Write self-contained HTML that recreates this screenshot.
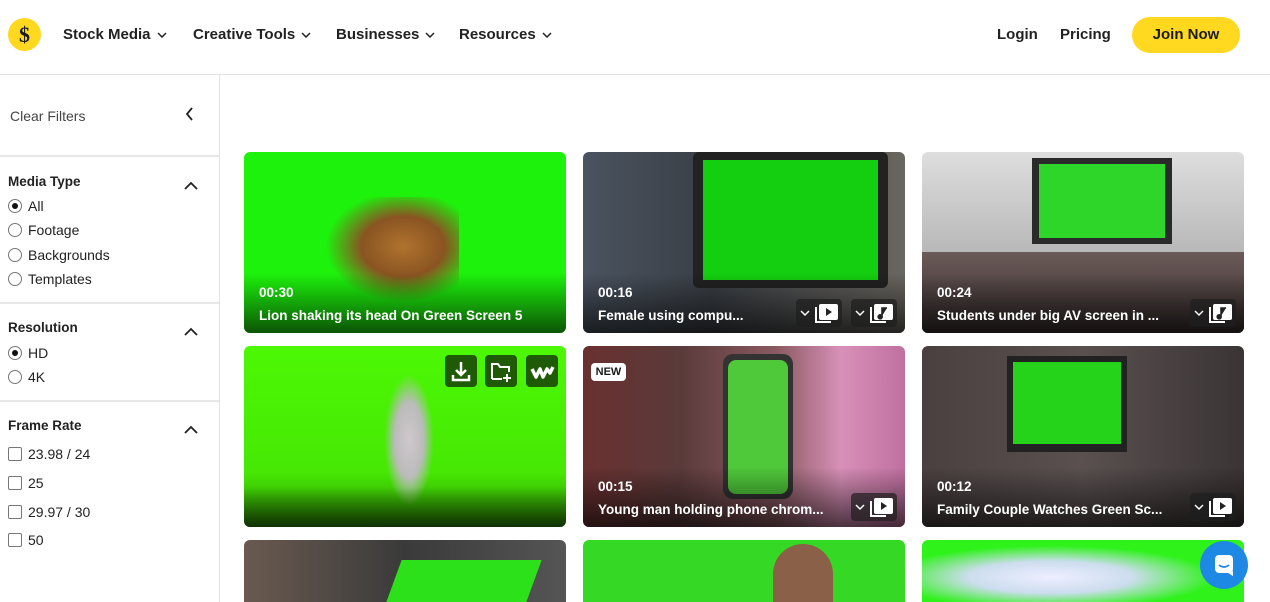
<!DOCTYPE html>
<html><head><style>
*{box-sizing:border-box;margin:0;padding:0}
html,body{width:1270px;height:602px;overflow:hidden}
body{background:#fff;font-family:"Liberation Sans",sans-serif;color:#1a1a1a;position:relative}
.hdr{position:absolute;left:0;top:0;width:1270px;height:75px;border-bottom:1px solid #e2e2e2}
.logo{position:absolute;left:8px;top:18px;width:33px;height:33px;border-radius:50%;background:#ffd81f;font:bold 22px "Liberation Serif",serif;text-align:center;line-height:33px}
.nav{position:absolute;top:26px;font-size:15px;font-weight:bold;color:#222}
.nav svg{margin-left:6px;vertical-align:middle}
.join{position:absolute;left:1132px;top:17px;width:108px;height:36px;border-radius:18px;background:#ffd81f;font-weight:bold;font-size:15px;text-align:center;line-height:36px}
.side{position:absolute;left:0;top:75px;width:220px;height:527px;border-right:1px solid #e2e2e2}
.sep{position:absolute;left:0;width:219px;height:2px;background:#e8e8e8}
.t{position:absolute;font-size:14px;color:#222}
.h{position:absolute;font-size:13.5px;font-weight:bold;color:#222;left:8px}
.r{position:absolute;left:8px;width:14px;height:14px;border:1px solid #777;border-radius:50%}
.r.on::after{content:"";position:absolute;left:3px;top:3px;width:6px;height:6px;border-radius:50%;background:#111}
.c{position:absolute;left:8px;width:14px;height:14px;border:1px solid #777;border-radius:2px}
.card{position:absolute;width:322px;height:181px;border-radius:6px;overflow:hidden}
.card.b{height:62px;border-radius:6px 6px 0 0}
.sh{position:absolute;left:0;bottom:0;width:100%;height:60px;background:linear-gradient(transparent,rgba(0,0,0,.65))}
.dur{position:absolute;left:15px;bottom:33px;color:#fff;font-weight:bold;font-size:13.5px}
.tit{position:absolute;left:15px;bottom:10px;color:#fff;font-weight:bold;font-size:13.5px}
.ic{position:absolute;bottom:6px;width:46px;height:28px;background:rgba(30,30,30,.7);border-radius:4px}
.ic svg{position:absolute;left:0;top:0}
.gb{position:absolute;top:9px;width:32px;height:32px;border-radius:4px;background:#1f5a07}
.gb svg{position:absolute;left:0;top:0}
.chat{position:absolute;left:1200px;top:541px;width:48px;height:48px;border-radius:50%;background:#1e88e5}
</style></head><body>
<div class="hdr">
<div class="logo">$</div>
<div class="nav" style="left:63px">Stock Media<svg width="10" height="6"><path d="M1 1l4 4 4-4" stroke="#222" stroke-width="1.5" fill="none"/></svg></div>
<div class="nav" style="left:193px">Creative Tools<svg width="10" height="6"><path d="M1 1l4 4 4-4" stroke="#222" stroke-width="1.5" fill="none"/></svg></div>
<div class="nav" style="left:336px">Businesses<svg width="10" height="6"><path d="M1 1l4 4 4-4" stroke="#222" stroke-width="1.5" fill="none"/></svg></div>
<div class="nav" style="left:459px">Resources<svg width="10" height="6"><path d="M1 1l4 4 4-4" stroke="#222" stroke-width="1.5" fill="none"/></svg></div>
<div class="nav" style="left:997px">Login</div>
<div class="nav" style="left:1060px">Pricing</div>
<div class="join">Join Now</div>
</div>
<div class="side">
<div class="t" style="left:10px;top:33px;color:#444">Clear Filters</div>
<svg style="position:absolute;left:185px;top:32px" width="10" height="14"><path d="M7 1L2 7l5 6" stroke="#222" stroke-width="1.8" fill="none"/></svg>
<div class="sep" style="top:80px"></div>
<div class="h" style="top:99px">Media Type</div>
<svg style="position:absolute;left:184px;top:106px" width="14" height="9"><path d="M1 8l6-6 6 6" stroke="#222" stroke-width="1.8" fill="none"/></svg>
<div class="r on" style="top:124px"></div><div class="t" style="left:28px;top:123px">All</div>
<div class="r" style="top:148px"></div><div class="t" style="left:28px;top:147px">Footage</div>
<div class="r" style="top:173px"></div><div class="t" style="left:28px;top:172px">Backgrounds</div>
<div class="r" style="top:197px"></div><div class="t" style="left:28px;top:196px">Templates</div>
<div class="sep" style="top:227px"></div>
<div class="h" style="top:245px">Resolution</div>
<svg style="position:absolute;left:184px;top:252px" width="14" height="9"><path d="M1 8l6-6 6 6" stroke="#222" stroke-width="1.8" fill="none"/></svg>
<div class="r on" style="top:271px"></div><div class="t" style="left:28px;top:270px">HD</div>
<div class="r" style="top:295px"></div><div class="t" style="left:28px;top:294px">4K</div>
<div class="sep" style="top:325px"></div>
<div class="h" style="top:343px">Frame Rate</div>
<svg style="position:absolute;left:184px;top:350px" width="14" height="9"><path d="M1 8l6-6 6 6" stroke="#222" stroke-width="1.8" fill="none"/></svg>
<div class="c" style="top:372px"></div><div class="t" style="left:28px;top:371px">23.98 / 24</div>
<div class="c" style="top:401px"></div><div class="t" style="left:28px;top:400px">25</div>
<div class="c" style="top:430px"></div><div class="t" style="left:28px;top:429px">29.97 / 30</div>
<div class="c" style="top:458px"></div><div class="t" style="left:28px;top:457px">50</div>
</div>

<svg width="0" height="0" style="position:absolute"><defs>
<g id="play"><path d="M5 12l4 4 4-4" stroke="#fff" stroke-width="1.5" fill="none"/><path d="M20 8v15h15" stroke="#fff" stroke-width="2" fill="none"/><rect x="23" y="5" width="19" height="16" rx="2" fill="#fff"/><path d="M30 9v8l6-4z" fill="#222"/></g>
<g id="mus"><path d="M5 12l4 4 4-4" stroke="#fff" stroke-width="1.5" fill="none"/><path d="M20 8v15h15" stroke="#fff" stroke-width="2" fill="none"/><rect x="23" y="5" width="19" height="16" rx="2" fill="#fff"/><path d="M31 17V9h5M31 17a2 2 0 1 1-1-1" stroke="#222" stroke-width="1.6" fill="#222"/></g>
</defs></svg>

<div class="card" style="left:244px;top:152px;background:#1df20c">
<div style="position:absolute;left:75px;top:45px;width:140px;height:110px;background:radial-gradient(ellipse at 60% 45%,#b0732e 0%,#8a5422 35%,transparent 65%)"></div>
<div class="sh"></div><div class="dur">00:30</div><div class="tit">Lion shaking its head On Green Screen 5</div></div>

<div class="card" style="left:583px;top:152px;background:linear-gradient(90deg,#4a5360,#3a3f45 40%,#555 70%,#6a6660)">
<div style="position:absolute;left:110px;top:0;width:195px;height:136px;background:#222;border-radius:6px"></div>
<div style="position:absolute;left:120px;top:8px;width:175px;height:120px;background:#13cf0f"></div>
<div class="sh"></div><div class="dur">00:16</div><div class="tit">Female using compu...</div>
<div class="ic" style="left:213px"><svg width="46" height="28"><use href="#play"/></svg></div><div class="ic" style="left:268px"><svg width="46" height="28"><use href="#mus"/></svg></div></div>

<div class="card" style="left:922px;top:152px;background:linear-gradient(#dedede,#b8b8b8 55%,#5a5050)">
<div style="position:absolute;left:110px;top:6px;width:140px;height:86px;background:#2a2a2a"></div>
<div style="position:absolute;left:117px;top:12px;width:126px;height:74px;background:#2fd62a"></div>
<div style="position:absolute;left:0;top:100px;width:322px;height:81px;background:linear-gradient(#6a5a58,#3a3030)"></div>
<div class="sh"></div><div class="dur">00:24</div><div class="tit">Students under big AV screen in ...</div>
<div class="ic" style="left:268px"><svg width="46" height="28"><use href="#mus"/></svg></div></div>

<div class="card" style="left:244px;top:346px;background:linear-gradient(#4cf804,#46e804 70%,#2c8a04)">
<div style="position:absolute;left:140px;top:28px;width:50px;height:132px;background:radial-gradient(ellipse,#cfc8cc 0%,#bbb 40%,transparent 70%)"></div>
<div class="gb" style="left:201px"><svg width="32" height="32"><path d="M16 7v13M11 15l5 5 5-5M8 20v5h16v-5" stroke="#fff" stroke-width="2.5" fill="none"/></svg></div>
<div class="gb" style="left:241px"><svg width="32" height="32"><path d="M7 24V9h6l2 3h9v5M7 24h10M22 19v8M18 23h8" stroke="#fff" stroke-width="2" fill="none"/></svg></div>
<div class="gb" style="left:282px"><svg width="32" height="32"><path d="M6 14l4 8 4-8 3 8 4-8 3 4 3-6" stroke="#fff" stroke-width="3.5" fill="none" stroke-linejoin="round"/></svg></div>
<div class="sh" style="height:40px"></div></div>

<div class="card" style="left:583px;top:346px;background:linear-gradient(90deg,#6a3030,#5a3a3a 30%,#8a5a60 60%,#d890b8 80%,#c070a0)">
<div style="position:absolute;left:140px;top:8px;width:70px;height:145px;border-radius:10px;background:#333"></div>
<div style="position:absolute;left:145px;top:14px;width:60px;height:134px;border-radius:8px;background:#4fc83a"></div>
<div style="position:absolute;left:8px;top:17px;width:35px;height:18px;background:#fff;border-radius:4px;font-size:11px;font-weight:bold;text-align:center;line-height:18px">NEW</div>
<div class="sh"></div><div class="dur">00:15</div><div class="tit">Young man holding phone chrom...</div>
<div class="ic" style="left:268px"><svg width="46" height="28"><use href="#play"/></svg></div></div>

<div class="card" style="left:922px;top:346px;background:linear-gradient(90deg,#4a4040,#5a5050 50%,#3a3434)">
<div style="position:absolute;left:85px;top:10px;width:120px;height:96px;background:#222"></div>
<div style="position:absolute;left:91px;top:16px;width:108px;height:82px;background:#25d31b"></div>
<div class="sh"></div><div class="dur">00:12</div><div class="tit">Family Couple Watches Green Sc...</div>
<div class="ic" style="left:268px"><svg width="46" height="28"><use href="#play"/></svg></div></div>

<div class="card b" style="left:244px;top:540px;background:linear-gradient(90deg,#6a5a50,#3a3a3a 50%,#555)"><div style="position:absolute;left:150px;top:20px;width:140px;height:42px;background:#2ce01a;transform:skewX(-20deg)"></div></div>
<div class="card b" style="left:583px;top:540px;background:#35d925"><div style="position:absolute;left:190px;top:4px;width:60px;height:58px;border-radius:30px 30px 0 0;background:#8a6048"></div></div>
<div class="card b" style="left:922px;top:540px;background:radial-gradient(ellipse at 40% 60%,#eef 0%,#cde 30%,#2ef21a 60%)"></div>
<div class="chat"><svg width="48" height="48"><rect x="15" y="14" width="18" height="18" rx="4" fill="#fff"/><path d="M19 24q5 4 10 0" stroke="#1e88e5" stroke-width="1.6" fill="none"/><path d="M28 32l5 3v-5z" fill="#fff"/></svg></div>
</body></html>
